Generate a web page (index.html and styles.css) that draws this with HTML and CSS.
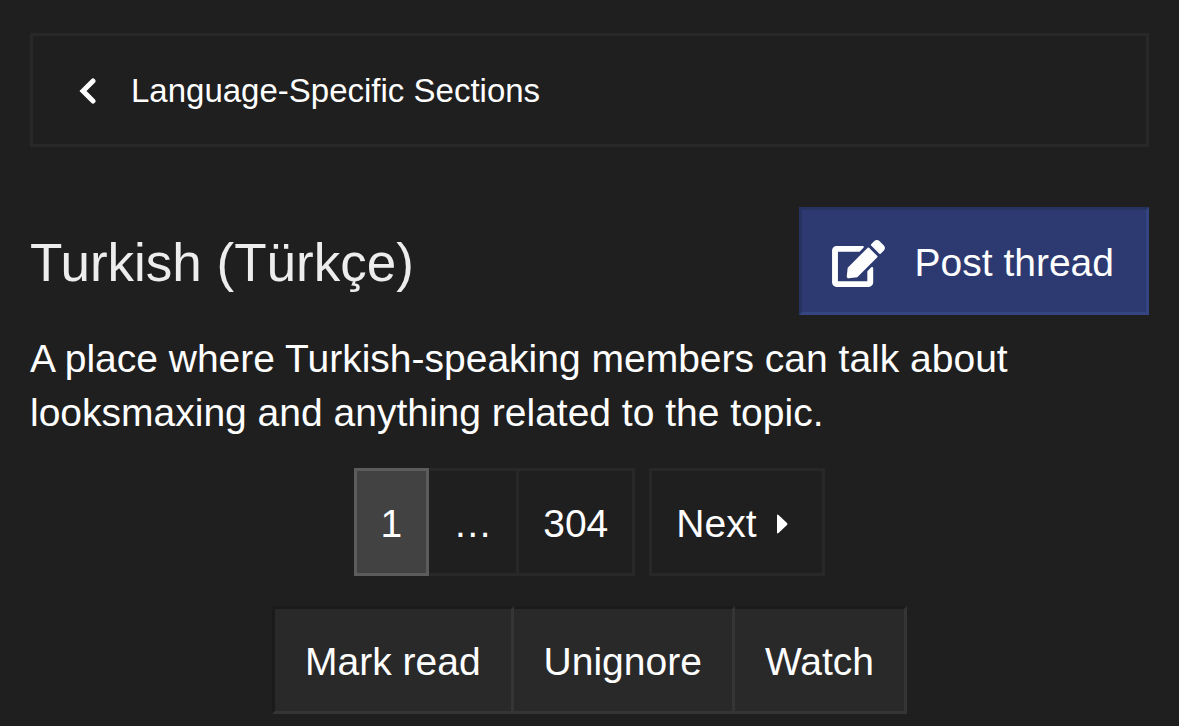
FILE: index.html
```html
<!DOCTYPE html>
<html lang="en">
<head>
  <meta charset="UTF-8">
  <meta name="viewport" content="width=device-width, initial-scale=1.0">
  <title>Turkish (Türkçe)</title>
  <link rel="stylesheet" href="styles.css">
</head>
<body>
  <nav class="breadcrumb" aria-label="Breadcrumb">
    <a href="#" class="crumb">
      <svg class="chevron" viewBox="0 0 17 26" aria-hidden="true"><path d="M14 3L4 13l10 10"/></svg>
      Language-Specific Sections
    </a>
  </nav>

  <main>
    <header class="title-row">
      <h1>Turkish (Türkçe)</h1>
      <button type="button" class="button button-cta">
        <svg class="edit" viewBox="0 0 576 512" aria-hidden="true"><path d="M402.600 83.200l90.200 90.200c3.800 3.800 3.800 10 0 13.800L274.400 405.600l-92.800 10.300c-12.400 1.400-22.900-9.100-21.500-21.500l10.300-92.800L388.800 83.200c3.800-3.800 10-3.800 13.800 0zm162-22.900l-48.800-48.800c-15.200-15.200-39.900-15.200-55.200 0l-35.400 35.400c-3.800 3.800-3.800 10 0 13.800l90.200 90.200c3.800 3.800 10 3.800 13.800 0l35.400-35.400c15.200-15.300 15.200-40 0-55.200zM384 346.200V448H64V128h229.800c3.200 0 6.200-1.300 8.500-3.500l40-40c7.600-7.600 2.200-20.500-8.500-20.500H48C21.500 64 0 85.500 0 112v352c0 26.500 21.500 48 48 48h352c26.500 0 48-21.500 48-48V306.200c0-10.700-12.900-16-20.500-8.500l-40 40c-2.200 2.300-3.500 5.300-3.500 8.500z"/></svg>
        Post thread
      </button>
    </header>

    <p class="description">A place where Turkish-speaking members can talk about looksmaxing and anything related to the topic.</p>

    <nav class="pagination" aria-label="Pages">
      <div class="pages">
        <a href="#" class="page current" aria-current="page">1</a>
        <a href="#" class="page">…</a>
        <a href="#" class="page">304</a>
      </div>
      <a href="#" class="page next">
        Next
        <svg class="caret" viewBox="0 0 12 20" aria-hidden="true"><path d="M1 1.500v17q0 1.500 1.500.5l8.500-8q1-1 0-2L2.500 1Q1 0 1 1.500z"/></svg>
      </a>
    </nav>

    <div class="actions">
      <button type="button" class="button">Mark read</button>
      <button type="button" class="button">Unignore</button>
      <button type="button" class="button">Watch</button>
    </div>
  </main>
</body>
</html>
```

FILE: styles.css
```css
* {
  box-sizing: border-box;
}
body {
  margin: 0;
  padding: 33px 30px 12px;
  background: #1f1f1f;
  color: #fefefe;
  font-family: "Helvetica Neue", "Liberation Sans", Arial, sans-serif;
  font-size: 39px;
  line-height: 54px;
}
a {
  color: inherit;
  text-decoration: none;
}
svg {
  flex: none;
  fill: currentColor;
}
.breadcrumb {
  display: flex;
  padding: 31px 46px 29px;
  border: 3px solid #282828;
  font-size: 33px;
  line-height: 48px;
}
.crumb {
  display: flex;
  align-items: center;
  gap: 35px;
}
.chevron {
  width: 17px;
  height: 26px;
  fill: none;
  stroke: currentColor;
  stroke-width: 5;
  stroke-linecap: round;
}
.title-row {
  display: flex;
  align-items: center;
  justify-content: space-between;
  gap: 30px;
  margin-top: 60px;
}
h1 {
  margin: 0;
  padding-top: 4px;
  color: #ededed;
  font-size: 53px;
  font-weight: 400;
  line-height: 66px;
}
.button {
  display: flex;
  align-items: center;
  padding: 26px 30px 22px;
  border: 3px solid;
  border-color: #1b1b1b #353535 #353535 #1b1b1b;
  background: #292929;
  color: #fefefe;
  font: inherit;
  cursor: pointer;
}
.button-cta {
  gap: 30px;
  padding-right: 32px;
  border-color: #26325f #354581 #354581 #26325f;
  background: #2c3a71;
}
.edit {
  width: 53px;
  height: 47px;
}
.description {
  margin: 17px 0 28px;
}
.pagination {
  display: flex;
  justify-content: center;
  gap: 14px;
}
.pages {
  display: flex;
}
.page {
  padding: 26px 24px 22px;
  border: 3px solid #282828;
}
.page + .page {
  margin-left: -3px;
}
.page.current {
  z-index: 1;
  border-color: #5c5c5c;
  background: #424242;
}
/* flex items follow z-index without being positioned */
.next {
  display: flex;
  align-items: center;
  gap: 20px;
  padding-right: 34px;
}
.caret {
  width: 12px;
  height: 20px;
}
.actions {
  display: flex;
  justify-content: center;
  margin-top: 30px;
}
.actions .button + .button {
  border-left: 0;
}
```
